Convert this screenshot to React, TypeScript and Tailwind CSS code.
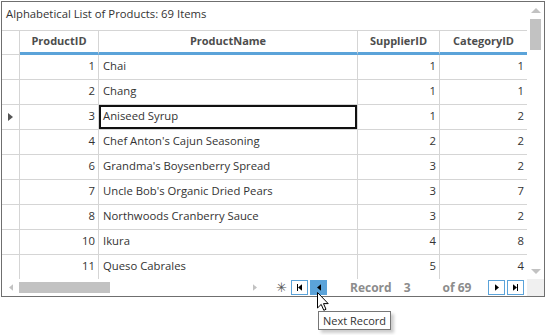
const products: [number, string, number, number][] = [
  [1, 'Chai', 1, 1],
  [2, 'Chang', 1, 1],
  [3, 'Aniseed Syrup', 1, 2],
  [4, "Chef Anton's Cajun Seasoning", 2, 2],
  [6, "Grandma's Boysenberry Spread", 3, 2],
  [7, "Uncle Bob's Organic Dried Pears", 3, 7],
  [8, 'Northwoods Cranberry Sauce', 3, 2],
  [10, 'Ikura', 4, 8],
  [11, 'Queso Cabrales', 5, 4],
]

const selected = 3

function PagerButton({ active, children }: { active?: boolean; children: React.ReactNode }) {
  return (
    <div
      className={`w-[17px] h-[15px] border border-[#5ba3d9] flex items-center justify-center ${active ? 'bg-[#5ba3d9]' : 'bg-white'}`}
    >
      {children}
    </div>
  )
}

function Tri({ dir, className }: { dir: 'left' | 'right' | 'up' | 'down'; className: string }) {
  const pts = {
    left: '5,0 5,8 0,4',
    right: '0,0 0,8 5,4',
    up: '0,5 10,5 5,0',
    down: '0,0 10,0 5,5',
  }[dir]
  const vb = dir === 'up' || dir === 'down' ? '0 0 10 5' : '0 0 5 8'
  return (
    <svg viewBox={vb} className={className}>
      <polygon points={pts} />
    </svg>
  )
}

export default function App() {
  return (
    <div className="relative w-[546px] h-[335px] bg-white font-['Open_Sans',sans-serif] text-[11.3px] text-[#333]">
      <div className="ml-px mt-px w-[544px] h-[296px] border border-[#6f6f6f] flex flex-col">
        <div className="flex h-[277px]">
          {/* grid */}
          <div className="w-[525px] flex flex-col">
            <div className="h-[29px] pl-[4px] pt-[4px] border-b border-[#d5d5d5] leading-[16px]">
              Alphabetical List of Products: 69 Items
            </div>
            <div className="flex h-[24px] font-bold text-[11px] text-[#4d4d4d]">
              <div className="w-[18px] border-r border-b border-[#d5d5d5]" />
              <div className="w-[79px] border-r border-r-[#d5d5d5] border-b-[3px] border-b-[#5ba3d9] flex items-center justify-center">
                ProductID
              </div>
              <div className="w-[259px] border-r border-r-[#d5d5d5] border-b-[3px] border-b-[#5ba3d9] flex items-center justify-center">
                ProductName
              </div>
              <div className="w-[82px] border-r border-r-[#d5d5d5] border-b-[3px] border-b-[#5ba3d9] flex items-center justify-center">
                SupplierID
              </div>
              <div className="w-[87px] border-b-[3px] border-b-[#5ba3d9] flex items-center justify-center">
                CategoryID
              </div>
            </div>
            <div className="h-[224px] overflow-hidden">
              {products.map(([id, name, sup, cat]) => (
                <div key={id} className="flex h-[25px] border-b border-[#d5d5d5] leading-[22px]">
                  <div className="w-[18px] border-r border-[#d5d5d5] flex items-center justify-center">
                    {id === selected && <Tri dir="right" className="w-[5px] h-[8px] fill-[#555]" />}
                  </div>
                  <div className="w-[79px] border-r border-[#d5d5d5] text-right pr-[3px]">{id}</div>
                  <div
                    className={`w-[259px] border-r border-[#d5d5d5] pl-[4px] ${id === selected ? 'shadow-[inset_0_0_0_2px_#111]' : ''}`}
                  >
                    {name}
                  </div>
                  <div className="w-[82px] border-r border-[#d5d5d5] text-right pr-[3px]">{sup}</div>
                  <div className="w-[87px] text-right pr-[3px]">{cat}</div>
                </div>
              ))}
            </div>
          </div>
          {/* vertical scrollbar */}
          <div className="w-[17px] flex flex-col items-center pt-[6px]">
            <Tri dir="up" className="w-[10px] h-[5px] fill-[#c2c2c2]" />
            <div className="mt-[6px] w-[11px] h-[31px] bg-[#c2c2c2]" />
            <div className="flex-1" />
            <Tri dir="down" className="w-[10px] h-[5px] fill-[#c2c2c2] mb-[5px]" />
          </div>
        </div>
        {/* bottom bar */}
        <div className="flex h-[17px] items-center">
          <div className="w-[269px] flex items-center pl-[7px]">
            <Tri dir="left" className="w-[4px] h-[7px] fill-[#c2c2c2]" />
            <div className="ml-[6px] w-[91px] h-[11px] bg-[#c2c2c2]" />
            <div className="flex-1" />
            <Tri dir="right" className="w-[4px] h-[7px] fill-[#c2c2c2] mr-[14px]" />
          </div>
          <div className="w-[256px] flex items-center font-bold text-[#8c8c8c] text-[12px]">
            <span className="ml-[5px] text-[13px] font-normal text-[#555] leading-none">✳</span>
            <div className="ml-[4px] flex gap-[2px]">
              <PagerButton>
                <div className="w-px h-[7px] bg-black" />
                <Tri dir="left" className="w-[4px] h-[7px] fill-black" />
              </PagerButton>
              <PagerButton active>
                <Tri dir="left" className="w-[4px] h-[7px] fill-black" />
              </PagerButton>
            </div>
            <span className="ml-[23px]">Record</span>
            <span className="ml-[12px]">3</span>
            <span className="ml-[32px]">of 69</span>
            <div className="ml-[17px] flex gap-[2px]">
              <PagerButton>
                <Tri dir="right" className="w-[4px] h-[7px] fill-black" />
              </PagerButton>
              <PagerButton>
                <Tri dir="right" className="w-[4px] h-[7px] fill-black" />
                <div className="w-px h-[7px] bg-black" />
              </PagerButton>
            </div>
          </div>
          <div className="w-[17px] h-full bg-[#f0f0f0]" />
        </div>
      </div>

      {/* tooltip */}
      <div className="absolute left-[318px] top-[310px] h-[19px] px-[4px] border border-[#767676] bg-white text-[11px] text-[#333] leading-[17px] shadow-[3px_3px_3px_rgba(0,0,0,0.2)]">
        Next Record
      </div>
      {/* mouse cursor */}
      <svg className="absolute left-[317px] top-[291px] w-[12px] h-[19px]" viewBox="0 0 12 19">
        <path d="M0.5 0.5 L0.5 16 L4.2 12.4 L6.8 18.3 L9 17.3 L6.5 11.6 L11.2 11.6 Z" fill="white" stroke="black" strokeWidth="1" />
      </svg>
    </div>
  )
}
